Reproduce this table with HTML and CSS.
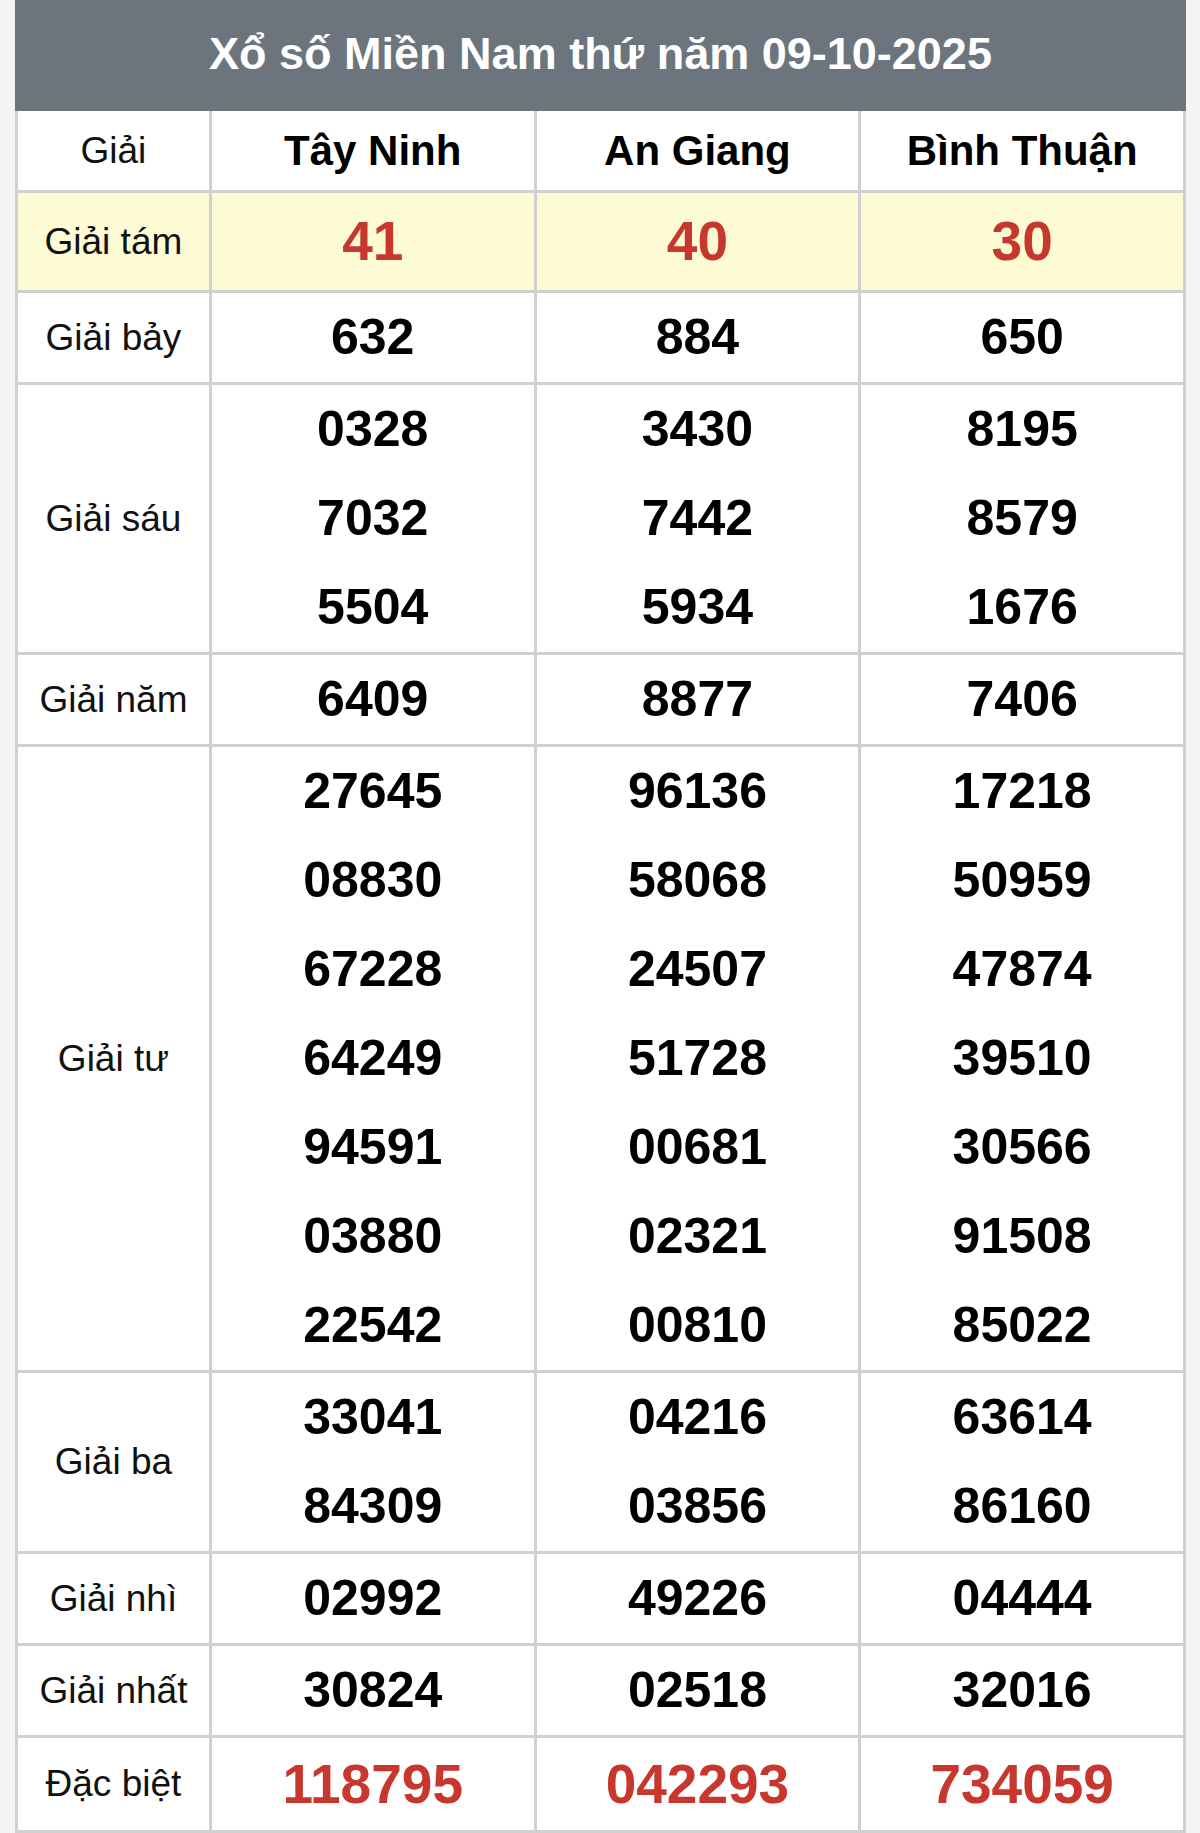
FILE: index.html
```html
<!DOCTYPE html>
<html lang="vi">
<head>
<meta charset="utf-8">
<title>Xổ số Miền Nam thứ năm 09-10-2025</title>
<link rel="stylesheet" href="styles.css">
</head>
<body>
<div class="wrap">
  <div class="title">Xổ số Miền Nam thứ năm 09-10-2025</div>
  <table class="kq">
    <colgroup>
      <col class="c-label">
      <col class="c-prov">
      <col class="c-prov">
      <col class="c-prov">
    </colgroup>
    <tr class="head">
      <td class="label">Giải</td>
      <td class="city">Tây Ninh</td>
      <td class="city">An Giang</td>
      <td class="city">Bình Thuận</td>
    </tr>
    <tr class="g8">
      <td class="label">Giải tám</td>
      <td><div class="num red">41</div></td>
      <td><div class="num red">40</div></td>
      <td><div class="num red">30</div></td>
    </tr>
    <tr>
      <td class="label">Giải bảy</td>
      <td><div class="num">632</div></td>
      <td><div class="num">884</div></td>
      <td><div class="num">650</div></td>
    </tr>
    <tr>
      <td class="label">Giải sáu</td>
      <td><div class="num">0328</div><div class="num">7032</div><div class="num">5504</div></td>
      <td><div class="num">3430</div><div class="num">7442</div><div class="num">5934</div></td>
      <td><div class="num">8195</div><div class="num">8579</div><div class="num">1676</div></td>
    </tr>
    <tr>
      <td class="label">Giải năm</td>
      <td><div class="num">6409</div></td>
      <td><div class="num">8877</div></td>
      <td><div class="num">7406</div></td>
    </tr>
    <tr>
      <td class="label">Giải tư</td>
      <td><div class="num">27645</div><div class="num">08830</div><div class="num">67228</div><div class="num">64249</div><div class="num">94591</div><div class="num">03880</div><div class="num">22542</div></td>
      <td><div class="num">96136</div><div class="num">58068</div><div class="num">24507</div><div class="num">51728</div><div class="num">00681</div><div class="num">02321</div><div class="num">00810</div></td>
      <td><div class="num">17218</div><div class="num">50959</div><div class="num">47874</div><div class="num">39510</div><div class="num">30566</div><div class="num">91508</div><div class="num">85022</div></td>
    </tr>
    <tr>
      <td class="label">Giải ba</td>
      <td><div class="num">33041</div><div class="num">84309</div></td>
      <td><div class="num">04216</div><div class="num">03856</div></td>
      <td><div class="num">63614</div><div class="num">86160</div></td>
    </tr>
    <tr>
      <td class="label">Giải nhì</td>
      <td><div class="num">02992</div></td>
      <td><div class="num">49226</div></td>
      <td><div class="num">04444</div></td>
    </tr>
    <tr>
      <td class="label">Giải nhất</td>
      <td><div class="num">30824</div></td>
      <td><div class="num">02518</div></td>
      <td><div class="num">32016</div></td>
    </tr>
    <tr class="db">
      <td class="label">Đặc biệt</td>
      <td><div class="num red">118795</div></td>
      <td><div class="num red">042293</div></td>
      <td><div class="num red">734059</div></td>
    </tr>
  </table>
</div>
</body>
</html>
```

FILE: styles.css
```css
html, body {
  margin: 0;
  padding: 0;
}

body {
  background: #f4f4f4;
  font-family: "Liberation Sans", Arial, Helvetica, sans-serif;
  color: #000;
}

.wrap {
  margin: 0 14px 0 15px;
  background: #fff;
}

.title {
  background: #6c757d;
  color: #fff;
  font-weight: bold;
  font-size: 45px;
  text-align: center;
  height: 111px;
  line-height: 108px;
}

.kq {
  width: 100%;
  border-collapse: collapse;
  table-layout: fixed;
}

.c-label {
  width: 16.6%;
}

.c-prov {
  width: 27.8%;
}

.kq td {
  border: 3px solid #d0d0d0;
  text-align: center;
  vertical-align: middle;
  padding: 0;
}

.kq .head td {
  border-top: 0;
  height: 79px;
}

.label {
  font-size: 37px;
  color: #111;
}

.city {
  font-size: 42px;
  font-weight: bold;
}

.num {
  font-size: 50px;
  font-weight: bold;
  line-height: 89px;
}

.red {
  color: #c8372d;
  font-size: 55px;
}

.g8 td {
  background: #fdfbd3;
}

.g8 .num {
  line-height: 97px;
}

.db .num {
  line-height: 92px;
}
```
